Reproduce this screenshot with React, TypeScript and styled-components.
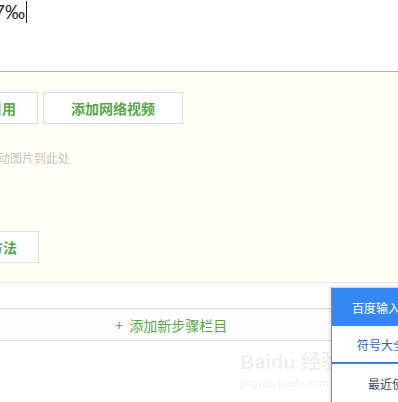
import React from "react";
import styled, { createGlobalStyle } from "styled-components";

const Global = createGlobalStyle`
  html, body { margin: 0; padding: 0; background: #fff; }
  body { width: 398px; height: 402px; overflow: hidden; font-family: "Liberation Sans", "Noto Sans CJK SC", sans-serif; }
`;

const Page = styled.div`
  position: relative;
  width: 398px;
  height: 402px;
  overflow: hidden;
  background: #fff;
`;

const Editor = styled.div`
  height: 71px;
  border-bottom: 1px solid #94c58f;
  background: #fff;
  display: flex;
  align-items: flex-start;
`;

const TypedText = styled.span`
  margin-left: -6px;
  margin-top: 1px;
  font-size: 20px;
  line-height: 22px;
  color: #333;
  border-right: 1px solid #222;
  padding-right: 1px;
`;

const StepBody = styled.div`
  height: 211px;
  background: #fffff6;
  border-bottom: 1px solid #e6e6e6;
  padding-top: 20px;
  box-sizing: border-box;
  display: flex;
  flex-direction: column;
`;

const ButtonRow = styled.div`
  display: flex;
  gap: 5px;
`;

const ActionButton = styled.div<{ $offset?: number; $pad: number }>`
  margin-left: ${(p) => p.$offset ?? 0}px;
  height: 32px;
  padding: 0 ${(p) => p.$pad}px;
  box-sizing: border-box;
  border: 1px solid #dedede;
  background: #fff;
  color: #5aa64a;
  font-weight: bold;
  font-size: 14px;
  display: flex;
  align-items: center;
  white-space: nowrap;
`;

const Hint = styled.div`
  margin-top: 27px;
  margin-left: -14px;
  font-size: 12px;
  color: #c4c4c4;
  line-height: 16px;
`;

const MethodRow = styled.div`
  margin-top: 64px;
  display: flex;
`;

const Spacer = styled.div`
  height: 25px;
  background: #fff;
`;

const AddBar = styled.div`
  height: 33px;
  box-sizing: border-box;
  border-top: 1px solid #dcdcdc;
  border-bottom: 1px solid #dcdcdc;
  background: #fdfdfd;
  display: flex;
  align-items: center;
  padding-left: 115px;
  color: #5aa64a;
  font-size: 14px;
  gap: 6px;
`;

const Plus = styled.span`
  font-size: 14px;
  color: #6aae5a;
`;

const Watermark = styled.div`
  position: absolute;
  left: 240px;
  top: 352px;
  color: rgba(200, 200, 200, 0.28);
  font-family: "Liberation Sans", "Noto Sans CJK SC", sans-serif;
  display: flex;
  flex-direction: column;
  line-height: 1;
`;

const WmTop = styled.span`
  font-size: 20px;
  font-weight: bold;
`;

const WmBottom = styled.span`
  font-size: 11px;
  margin-top: 6px;
`;

const Popup = styled.div`
  position: absolute;
  left: 331px;
  top: 287px;
  width: 90px;
  height: 130px;
  background: #fff;
  border-left: 1px solid #8a8a8a;
  border-top: 1px solid #d8d8d8;
  box-shadow: -1px 0 3px rgba(0, 0, 0, 0.15);
  display: flex;
  flex-direction: column;
`;

const PopHeader = styled.div`
  height: 38px;
  background: #3388f5;
  color: #fff;
  font-size: 12px;
  display: flex;
  align-items: center;
  padding-left: 20px;
  white-space: nowrap;
`;

const PopItem = styled.div<{ $active?: boolean; $pad: number }>`
  height: 38px;
  box-sizing: border-box;
  padding-left: ${(p) => p.$pad}px;
  font-size: 12px;
  color: ${(p) => (p.$active ? "#2f62b4" : "#3a4a6a")};
  display: flex;
  align-items: center;
  white-space: nowrap;
  border-bottom: ${(p) => (p.$active ? "2px solid #3c7be0" : "none")};
`;

export default function App() {
  return (
    <Page>
      <Global />
      <Editor>
        <TypedText>7‰</TypedText>
      </Editor>
      <StepBody>
        <ButtonRow>
          <ActionButton $offset={-34} $pad={21}>引用</ActionButton>
          <ActionButton $pad={27}>添加网络视频</ActionButton>
        </ButtonRow>
        <Hint>拖动图片到此处</Hint>
        <MethodRow>
          <ActionButton $offset={-33} $pad={21}>方法</ActionButton>
        </MethodRow>
      </StepBody>
      <Spacer />
      <AddBar>
        <Plus>+</Plus>
        <span>添加新步骤栏目</span>
      </AddBar>
      <Watermark>
        <WmTop>Baidu 经验</WmTop>
        <WmBottom>jingyan.baidu.com</WmBottom>
      </Watermark>
      <Popup>
        <PopHeader>百度输入法</PopHeader>
        <PopItem $active $pad={25}>符号大全</PopItem>
        <PopItem $pad={36}>最近使用</PopItem>
      </Popup>
    </Page>
  );
}
